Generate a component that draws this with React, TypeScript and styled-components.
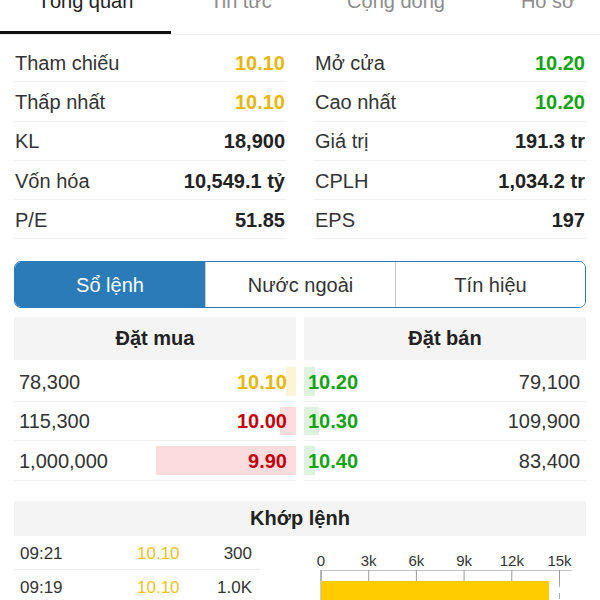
import React from "react";
import styled, { createGlobalStyle } from "styled-components";

const GlobalStyle = createGlobalStyle`
  body {
    margin: 0;
    background: #fff;
    font-family: "Liberation Sans", Arial, sans-serif;
    color: #2a2a2a;
  }
`;

type Tone = "ref" | "up" | "down" | "plain";

const toneColor = (t: Tone) =>
  t === "ref" ? "#e8b60c" : t === "up" ? "#13a313" : t === "down" ? "#c4000d" : "#222";

const tabs = [
  { label: "Tổng quan", w: 171 },
  { label: "Tin tức", w: 140 },
  { label: "Cộng đồng", w: 170 },
  { label: "Hồ sơ", w: 134 },
];

const stats: { label: string; value: string; tone: Tone }[] = [
  { label: "Tham chiếu", value: "10.10", tone: "ref" },
  { label: "Mở cửa", value: "10.20", tone: "up" },
  { label: "Thấp nhất", value: "10.10", tone: "ref" },
  { label: "Cao nhất", value: "10.20", tone: "up" },
  { label: "KL", value: "18,900", tone: "plain" },
  { label: "Giá trị", value: "191.3 tr", tone: "plain" },
  { label: "Vốn hóa", value: "10,549.1 tỷ", tone: "plain" },
  { label: "CPLH", value: "1,034.2 tr", tone: "plain" },
  { label: "P/E", value: "51.85", tone: "plain" },
  { label: "EPS", value: "197", tone: "plain" },
];

const bids: { qty: string; price: string; tone: Tone; bar: number }[] = [
  { qty: "78,300", price: "10.10", tone: "ref", bar: 10 },
  { qty: "115,300", price: "10.00", tone: "down", bar: 16 },
  { qty: "1,000,000", price: "9.90", tone: "down", bar: 140 },
];

const asks: { qty: string; price: string; tone: Tone; bar: number }[] = [
  { qty: "79,100", price: "10.20", tone: "up", bar: 11 },
  { qty: "109,900", price: "10.30", tone: "up", bar: 15 },
  { qty: "83,400", price: "10.40", tone: "up", bar: 11 },
];

const matches = [
  { time: "09:21", price: "10.10", vol: "300" },
  { time: "09:19", price: "10.10", vol: "1.0K" },
];

const Page = styled.div`
  width: 600px;
  height: 600px;
  overflow: hidden;
`;

const TabBar = styled.div`
  display: flex;
  height: 35px;
  border-bottom: 1px solid #eeeeee;
  box-sizing: border-box;
  overflow: hidden;
`;

const Tab = styled.div<{ $active?: boolean; $w: number }>`
  flex: 0 0 ${(p) => p.$w}px;
  height: 34px;
  box-sizing: border-box;
  border-bottom: 3px solid ${(p) => (p.$active ? "#111" : "transparent")};
  text-align: center;
  font-size: 20px;
  line-height: 20px;
  color: ${(p) => (p.$active ? "#222" : "#8c8c8c")};
`;

const TabLabel = styled.div`
  margin-top: -9px;
`;

const StatsGrid = styled.div`
  display: grid;
  grid-template-columns: 1fr 1fr;
  column-gap: 28px;
  padding: 8px 14px 0;
`;

const StatRow = styled.div`
  display: flex;
  justify-content: space-between;
  align-items: center;
  height: 39.3px;
  box-sizing: border-box;
  border-bottom: 1px solid #f0f0f0;
  font-size: 20px;
  padding: 2px 1px 0;
`;

const StatLabel = styled.span`
  color: #333;
`;

const StatValue = styled.span<{ $tone: Tone }>`
  font-weight: 700;
  color: ${(p) => toneColor(p.$tone)};
`;

const Segmented = styled.div`
  display: grid;
  grid-template-columns: repeat(3, 1fr);
  height: 47px;
  margin: 22px 14px 0;
  box-sizing: border-box;
  border: 1px solid #2b7bb9;
  border-radius: 7px;
  overflow: hidden;
`;

const Segment = styled.div<{ $active?: boolean }>`
  display: flex;
  align-items: center;
  justify-content: center;
  padding-top: 1px;
  font-size: 20px;
  background: ${(p) => (p.$active ? "#2b7bb9" : "#fff")};
  color: ${(p) => (p.$active ? "#fff" : "#333")};
  & + & {
    border-left: 1px solid #c9c9c9;
  }
`;

const OrderBook = styled.div`
  display: grid;
  grid-template-columns: 1fr 1fr;
  column-gap: 8px;
  margin: 9px 14px 0;
`;

const SideColumn = styled.div`
  display: flex;
  flex-direction: column;
`;

const SectionHeader = styled.div<{ $h: number }>`
  height: ${(p) => p.$h}px;
  display: flex;
  align-items: center;
  justify-content: center;
  background: #f4f4f4;
  font-size: 20px;
  font-weight: 700;
  color: #222;
`;

const OrderRows = styled.div`
  margin-top: 2px;
`;

const OrderRow = styled.div<{ $side: "buy" | "sell" }>`
  position: relative;
  display: flex;
  justify-content: space-between;
  align-items: center;
  height: 39.5px;
  box-sizing: border-box;
  border-bottom: 1px solid #f0f0f0;
  padding: ${(p) => (p.$side === "buy" ? "1px 9px 0 5px" : "1px 6px 0 4px")};
  font-size: 20px;
`;

const DepthBar = styled.div<{ $side: "buy" | "sell"; $tone: Tone }>`
  position: absolute;
  top: 5px;
  bottom: 5px;
  ${(p) => (p.$side === "buy" ? "right: 0;" : "left: 0;")}
  background: ${(p) =>
    p.$tone === "ref" ? "#fbf4d6" : p.$tone === "down" ? "#fcdcdd" : "#dff1df"};
`;

const Qty = styled.span`
  position: relative;
  color: #333;
`;

const Price = styled.span<{ $tone: Tone }>`
  position: relative;
  font-weight: 700;
  color: ${(p) => toneColor(p.$tone)};
`;

const MatchSection = styled.div`
  margin: 20.5px 14px 0;
`;

const MatchBody = styled.div`
  display: grid;
  grid-template-columns: 246px 1fr;
  column-gap: 40px;
`;

const MatchRow = styled.div`
  display: grid;
  grid-template-columns: 117px 1fr auto;
  align-items: center;
  height: 34px;
  box-sizing: border-box;
  border-bottom: 1px solid #eeeeee;
  padding: 2px 8px 0 6px;
  font-size: 17px;
  color: #333;
`;

const MatchPrice = styled.span`
  color: #eec21c;
`;

const Chart = styled.svg`
  display: block;
  width: 286px;
  height: 80px;
  font-family: "Liberation Sans", Arial, sans-serif;
`;

const ticks = ["0", "3k", "6k", "9k", "12k", "15k"];
const x0 = 21;
const step = 47.7;

function VolumeChart() {
  return (
    <Chart viewBox="0 0 286 80">
      {ticks.map((t, i) => (
        <text
          key={t}
          x={x0 + i * step}
          y={29.5}
          textAnchor="middle"
          fontSize={15}
          fill="#333"
        >
          {t}
        </text>
      ))}
      <line x1={x0} y1={34.5} x2={272} y2={34.5} stroke="#c4c4c4" strokeWidth={1} />
      {ticks.map((t, i) => (
        <line
          key={"tk" + t}
          x1={x0 + i * step}
          y1={34}
          x2={x0 + i * step}
          y2={45}
          stroke="#9a9a9a"
          strokeWidth={1}
        />
      ))}
      <line
        x1={x0 + 5 * step}
        y1={45}
        x2={x0 + 5 * step}
        y2={80}
        stroke="#aaa"
        strokeWidth={1}
        strokeDasharray="6 6"
      />
      <line x1={x0} y1={34} x2={x0} y2={80} stroke="#9a9a9a" strokeWidth={1} />
      <rect x={x0} y={45} width={228} height={40} fill="#ffcc00" />
    </Chart>
  );
}

export default function App() {
  return (
    <Page>
      <GlobalStyle />
      <TabBar>
        {tabs.map((t, i) => (
          <Tab key={t.label} $w={t.w} $active={i === 0}>
            <TabLabel>{t.label}</TabLabel>
          </Tab>
        ))}
      </TabBar>

      <StatsGrid>
        {stats.map((s) => (
          <StatRow key={s.label}>
            <StatLabel>{s.label}</StatLabel>
            <StatValue $tone={s.tone}>{s.value}</StatValue>
          </StatRow>
        ))}
      </StatsGrid>

      <Segmented>
        <Segment $active>Sổ lệnh</Segment>
        <Segment>Nước ngoài</Segment>
        <Segment>Tín hiệu</Segment>
      </Segmented>

      <OrderBook>
        <SideColumn>
          <SectionHeader $h={43}>Đặt mua</SectionHeader>
          <OrderRows>
            {bids.map((b) => (
              <OrderRow key={b.qty} $side="buy">
                <DepthBar $side="buy" $tone={b.tone} style={{ width: b.bar }} />
                <Qty>{b.qty}</Qty>
                <Price $tone={b.tone}>{b.price}</Price>
              </OrderRow>
            ))}
          </OrderRows>
        </SideColumn>
        <SideColumn>
          <SectionHeader $h={43}>Đặt bán</SectionHeader>
          <OrderRows>
            {asks.map((a) => (
              <OrderRow key={a.qty} $side="sell">
                <DepthBar $side="sell" $tone={a.tone} style={{ width: a.bar }} />
                <Price $tone={a.tone}>{a.price}</Price>
                <Qty>{a.qty}</Qty>
              </OrderRow>
            ))}
          </OrderRows>
        </SideColumn>
      </OrderBook>

      <MatchSection>
        <SectionHeader $h={35}>Khớp lệnh</SectionHeader>
        <MatchBody>
          <div>
            {matches.map((m) => (
              <MatchRow key={m.time}>
                <span>{m.time}</span>
                <MatchPrice>{m.price}</MatchPrice>
                <span>{m.vol}</span>
              </MatchRow>
            ))}
          </div>
          <VolumeChart />
        </MatchBody>
      </MatchSection>
    </Page>
  );
}
